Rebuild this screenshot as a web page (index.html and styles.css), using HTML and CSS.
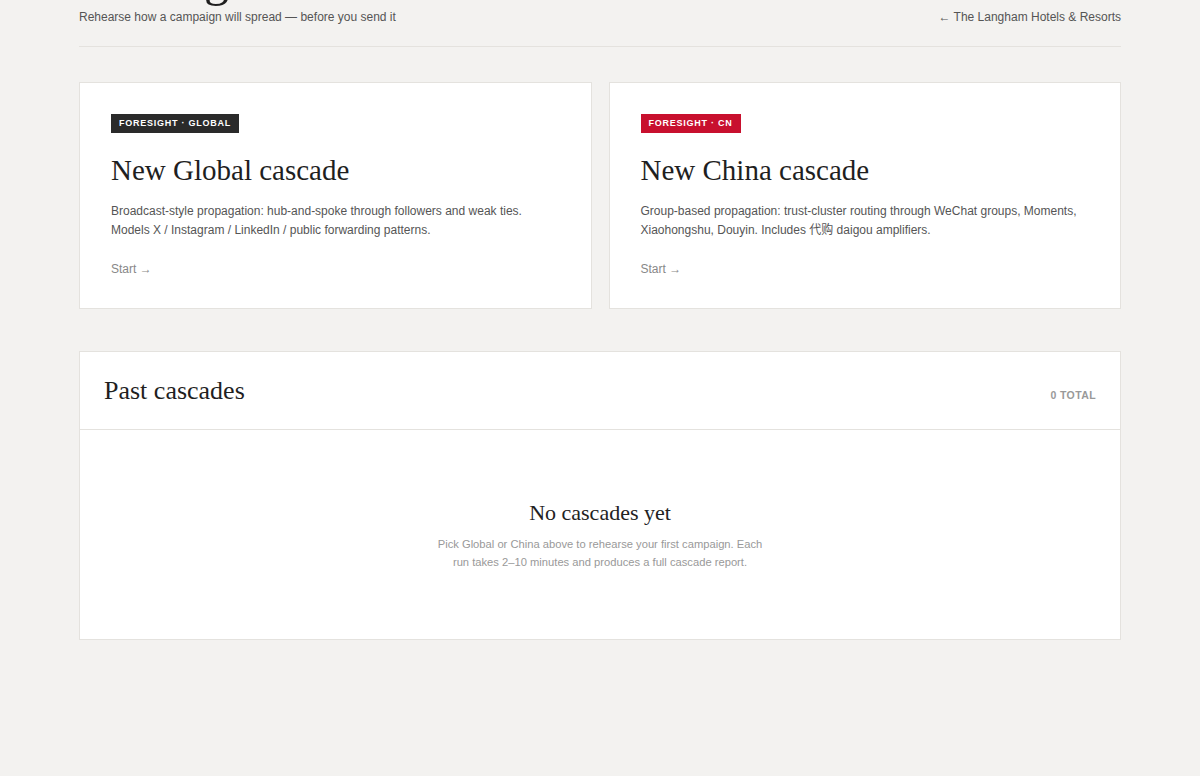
FILE: index.html
```html
<!DOCTYPE html>
<html lang="en">
<head>
  <meta charset="UTF-8">
  <title>Foresight</title>
  <link rel="stylesheet" href="styles.css">
</head>
<body>
<div class="page">
  <!--头部-->
  <header class="masthead">
    <div class="masthead-left">
      <h1 class="brand">Foresight</h1>
      <p class="tagline">Rehearse how a campaign will spread — before you send it</p>
    </div>
    <a class="back-link" href="#">&larr; The Langham Hotels &amp; Resorts</a>
  </header>

  <!--新建-->
  <section class="launch">
    <div class="launch-card">
      <span class="tag tag-dark">FORESIGHT · GLOBAL</span>
      <h2 class="launch-title">New Global cascade</h2>
      <p class="launch-desc">Broadcast-style propagation: hub-and-spoke through followers and weak ties.
        Models X / Instagram / LinkedIn / public forwarding patterns.</p>
      <a class="launch-start" href="#">Start &rarr;</a>
    </div>
    <div class="launch-card">
      <span class="tag tag-red">FORESIGHT · CN</span>
      <h2 class="launch-title">New China cascade</h2>
      <p class="launch-desc">Group-based propagation: trust-cluster routing through WeChat groups, Moments,
        Xiaohongshu, Douyin. Includes 代购 daigou amplifiers.</p>
      <a class="launch-start" href="#">Start &rarr;</a>
    </div>
  </section>

  <!--历史记录-->
  <section class="history">
    <div class="history-head">
      <h3 class="history-title">Past cascades</h3>
      <span class="history-count">0 TOTAL</span>
    </div>
    <div class="history-empty">
      <h4 class="empty-title">No cascades yet</h4>
      <p class="empty-text">Pick Global or China above to rehearse your first campaign. Each
        run takes 2–10 minutes and produces a full cascade report.</p>
    </div>
  </section>
</div>
<script src="scroll.js"></script>
</body>
</html>
```

FILE: styles.css
```css
* {
  margin: 0;
  padding: 0;
  box-sizing: border-box;
}

body {
  background-color: #f3f2f0;
  font-family: "Liberation Sans", Arial, sans-serif;
  color: #222;
}

a {
  text-decoration: none;
  color: inherit;
}

.page {
  width: 1042px;
  margin: 0 auto;
  padding: 40px 0 200px;
}

/*头部*/
.masthead {
  display: flex;
  justify-content: space-between;
  align-items: flex-end;
  padding-bottom: 22px;
  border-bottom: 1px solid #e4e2de;
}

.brand {
  font-family: "Liberation Serif", "Times New Roman", serif;
  font-weight: normal;
  font-size: 50px;
  line-height: 40px;
  color: #1f1f1f;
  margin-bottom: 12px;
}

.tagline {
  font-size: 12px;
  color: #555;
  margin-top: 2px;
}

.back-link {
  font-size: 12px;
  color: #555;
}

/*卡片*/
.launch {
  display: grid;
  grid-template-columns: 1fr 1fr;
  gap: 17px;
  margin-top: 35px;
}

.launch-card {
  background: #fff;
  border: 1px solid #e4e2de;
  padding: 29px 31px 31px;
  height: 227px;
}

.tag {
  display: inline-block;
  height: 19px;
  line-height: 19px;
  padding: 0 8px;
  font-size: 9px;
  font-weight: bold;
  letter-spacing: 0.75px;
  color: #fff;
}

.tag-dark {
  background: #2a2a2a;
}

.tag-red {
  background: #c8102e;
}

.launch-title {
  font-family: "Liberation Serif", "Times New Roman", serif;
  font-weight: normal;
  font-size: 29px;
  line-height: 36px;
  color: #1f1f1f;
  margin-top: 19px;
}

.launch-desc {
  font-family: "Liberation Sans", "Noto Sans CJK SC", sans-serif;
  font-size: 12px;
  line-height: 19px;
  color: #555;
  margin-top: 14px;
}

.launch-start {
  display: inline-block;
  font-size: 12px;
  color: #888;
  margin-top: 22px;
}

/*历史*/
.history {
  background: #fff;
  border: 1px solid #e4e2de;
  margin-top: 42px;
}

.history-head {
  display: flex;
  justify-content: space-between;
  align-items: center;
  height: 78px;
  padding: 0 24px;
  border-bottom: 1px solid #e4e2de;
}

.history-title {
  font-family: "Liberation Serif", "Times New Roman", serif;
  font-weight: normal;
  font-size: 26px;
  color: #1f1f1f;
}

.history-count {
  font-size: 10.5px;
  font-weight: bold;
  letter-spacing: 0.4px;
  color: #999;
  margin-top: 8px;
}

.history-empty {
  height: 209px;
  padding-top: 70px;
  text-align: center;
}

.empty-title {
  font-family: "Liberation Serif", "Times New Roman", serif;
  font-weight: normal;
  font-size: 22px;
  color: #222;
}

.empty-text {
  width: 340px;
  margin: 9px auto 0;
  font-size: 11.2px;
  line-height: 18px;
  color: #999;
}
```

FILE: scroll.js
```js
// 滚动到分隔线位置
var head = document.querySelector('.masthead');
var line = head.getBoundingClientRect().bottom + window.pageYOffset;
window.scrollTo(0, line - 47);
```
